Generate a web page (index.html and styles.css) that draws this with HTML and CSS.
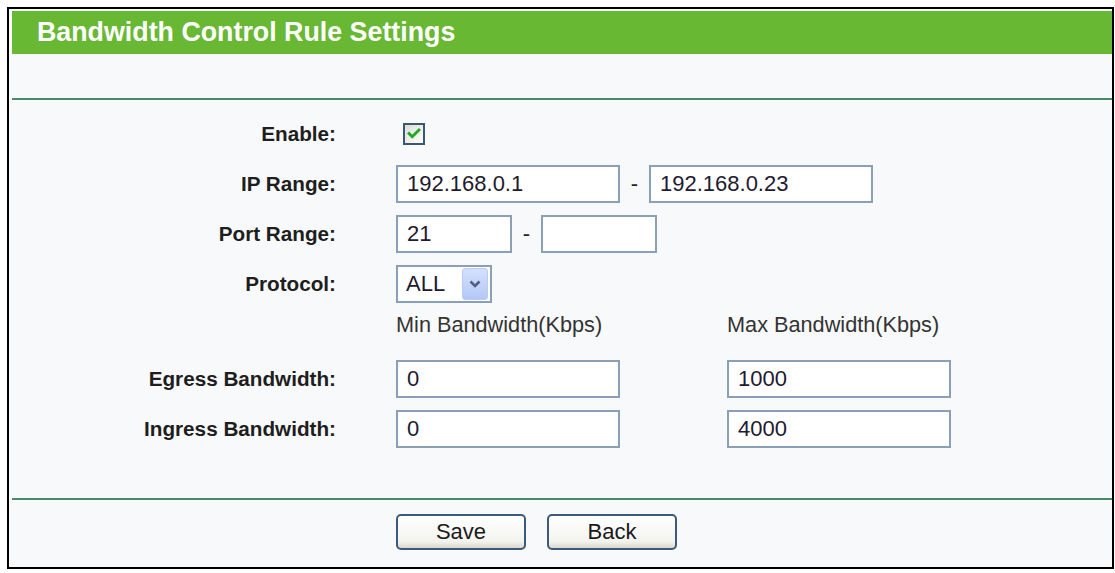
FILE: index.html
```html
<!DOCTYPE html>
<html>
<head>
<meta charset="utf-8">
<title>Bandwidth Control Rule Settings</title>
<link rel="stylesheet" href="styles.css">
</head>
<body>
<div class="frame">
  <div class="panel">
    <div class="title">Bandwidth Control Rule Settings</div>
    <div class="spacer"></div>
    <div class="rule"></div>
    <div class="form">
      <div class="row">
        <div class="label">Enable:</div>
        <div class="ctrl">
          <span class="checkbox"><svg viewBox="0 0 20 20" width="18" height="18"><path d="M4.5 9.5 L8 13 L15.5 5.5" fill="none" stroke="#23a823" stroke-width="3.2" stroke-linecap="square"/></svg></span>
        </div>
      </div>
      <div class="row">
        <div class="label">IP Range:</div>
        <div class="ctrl">
          <span class="input w-wide">192.168.0.1</span>
          <span class="dash">-</span>
          <span class="input w-wide">192.168.0.23</span>
        </div>
      </div>
      <div class="row">
        <div class="label">Port Range:</div>
        <div class="ctrl">
          <span class="input w-port">21</span>
          <span class="dash">-</span>
          <span class="input w-port"></span>
        </div>
      </div>
      <div class="row">
        <div class="label">Protocol:</div>
        <div class="ctrl">
          <span class="select">
            <span class="select-text">ALL</span>
            <span class="select-btn"><svg viewBox="0 0 12 8" width="12" height="8"><path d="M1.5 1.5 L6 6 L10.5 1.5" fill="none" stroke="#4d6185" stroke-width="2.6"/></svg></span>
          </span>
        </div>
      </div>
      <div class="row row-head">
        <div class="label"></div>
        <div class="ctrl ctrl-pair">
          <span class="colhead">Min Bandwidth(Kbps)</span>
          <span class="colhead">Max Bandwidth(Kbps)</span>
        </div>
      </div>
      <div class="row">
        <div class="label">Egress Bandwidth:</div>
        <div class="ctrl ctrl-pair">
          <span class="input w-wide">0</span>
          <span class="input w-wide">1000</span>
        </div>
      </div>
      <div class="row">
        <div class="label">Ingress Bandwidth:</div>
        <div class="ctrl ctrl-pair">
          <span class="input w-wide">0</span>
          <span class="input w-wide">4000</span>
        </div>
      </div>
    </div>
    <div class="rule"></div>
    <div class="buttons">
      <button class="btn">Save</button>
      <button class="btn">Back</button>
    </div>
  </div>
</div>
</body>
</html>
```

FILE: styles.css
```css
html, body {
  margin: 0;
  padding: 0;
  background: #ffffff;
}

body {
  font-family: "Liberation Sans", Arial, sans-serif;
  color: #222;
}

.frame {
  margin: 7px 0 0 7px;
  width: 1103px;
  height: 558px;
  border: 2px solid #000;
  background: #f8f9fa;
}

.panel {
  padding: 2px 0 0 3px;
}

.title {
  height: 43px;
  line-height: 43px;
  background: #68b834;
  color: #fff;
  font-weight: bold;
  font-size: 26.8px;
  padding-left: 25px;
  white-space: nowrap;
}

.spacer {
  height: 44px;
}

.rule {
  height: 2px;
  background: #4a8a6b;
}

.form {
  height: 398px;
  box-sizing: border-box;
  padding-top: 9px;
}

.row {
  display: flex;
  align-items: center;
  height: 50px;
  column-gap: 60px;
}

.row-head {
  height: 45px;
  align-items: flex-start;
}

.label {
  width: 324px;
  flex: none;
  text-align: right;
  font-weight: bold;
  font-size: 20.7px;
  color: #1e1e1e;
}

.ctrl {
  display: flex;
  align-items: center;
}

.ctrl-pair {
  column-gap: 107px;
}

.checkbox {
  width: 18px;
  height: 18px;
  margin-left: 7px;
  border: 2px solid #3c5675;
  background: linear-gradient(135deg, #dcdcd7, #ffffff);
  display: flex;
  align-items: center;
  justify-content: center;
}

.input {
  box-sizing: border-box;
  height: 38px;
  border: 2px solid #8aa0b9;
  background: #fff;
  font-size: 22px;
  line-height: 34px;
  padding-left: 9px;
  color: #221a30;
  white-space: nowrap;
}

.w-wide {
  width: 224px;
}

.w-port {
  width: 116px;
}

.dash {
  width: 29px;
  text-align: center;
  font-size: 22px;
  color: #222;
}

.select {
  box-sizing: border-box;
  width: 96px;
  height: 38px;
  border: 2px solid #8aa0b9;
  background: #fff;
  display: flex;
  align-items: center;
  justify-content: space-between;
  padding: 0 2px 0 8px;
}

.select-text {
  font-size: 22px;
  color: #221a30;
}

.select-btn {
  box-sizing: border-box;
  width: 26px;
  height: 32px;
  border: 1px solid #b9cbf3;
  border-radius: 3px;
  background: linear-gradient(#d4e0fd, #b4c8f6);
  display: flex;
  align-items: center;
  justify-content: center;
}

.colhead {
  width: 224px;
  font-size: 21.7px;
  line-height: 32px;
  color: #333;
  white-space: nowrap;
}

.buttons {
  padding: 14px 0 0 384px;
  display: flex;
  column-gap: 21px;
}

.btn {
  width: 130px;
  height: 36px;
  border: 2px solid #3a5a80;
  border-radius: 5px;
  background: linear-gradient(#ffffff, #f3f3ee 80%, #dcd8cc);
  font-family: "Liberation Sans", Arial, sans-serif;
  font-size: 22px;
  color: #1a1a1a;
  padding: 0;
}
```
